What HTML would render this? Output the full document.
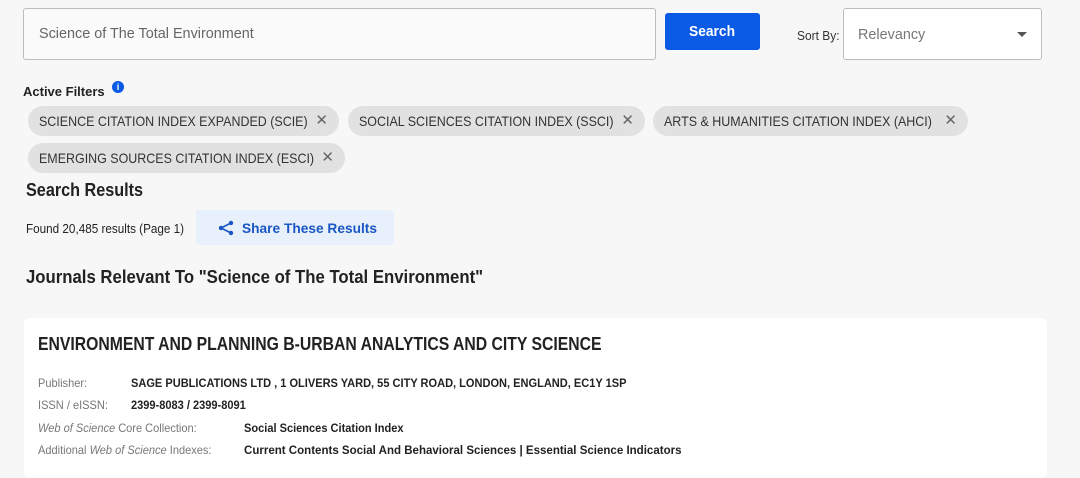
<!DOCTYPE html>
<html><head><meta charset="utf-8"><style>
*{margin:0;padding:0;box-sizing:border-box}
body{width:1080px;height:460px;background:#f7f7f7;font-family:"Liberation Sans",sans-serif;position:relative;overflow:hidden;color:#333}
.a{position:absolute;white-space:nowrap}
.s{display:inline-block;transform-origin:0 50%;transform:scaleX(.92);white-space:nowrap}
.chip{position:absolute;height:30px;border-radius:15px;background:#e1e1e1;font-size:14px;line-height:30px;padding-left:11px;color:#333;white-space:nowrap}
.chip .x{position:absolute;right:11px;top:0;color:#666;font-size:15px}
.chip .s{transform:scaleX(.89)}
.lab{font-size:12px;color:#777}
.val{font-size:12px;font-weight:bold;color:#222}
</style></head><body>
<div class="a" style="left:23px;top:8px;width:633px;height:52px;border:1px solid #bdbdbd;border-radius:3px;background:#fafafa"></div>
<div class="a" style="left:39px;top:25px;font-size:15px;color:#666"><span class="s" style="transform:scaleX(.96)">Science of The Total Environment</span></div>
<div class="a" style="left:665px;top:13px;width:95px;height:37px;background:#0a5ae6;border-radius:3px;color:#fff;font-weight:bold;font-size:15px;line-height:38px;text-align:center"><span class="s" style="transform-origin:50% 50%">Search</span></div>
<div class="a" style="left:797px;top:28px;font-size:13px;color:#333"><span class="s">Sort By:</span></div>
<div class="a" style="left:843px;top:8px;width:199px;height:52px;border:1px solid #bdbdbd;border-radius:3px;background:#fff"></div>
<div class="a" style="left:858px;top:26px;font-size:15px;color:#777"><span class="s" style="transform:scaleX(.96)">Relevancy</span></div>
<div class="a" style="left:1017px;top:32px;width:0;height:0;border-left:5px solid transparent;border-right:5px solid transparent;border-top:5px solid #555"></div>
<div class="a" style="left:23px;top:84px;font-size:13px;font-weight:bold;color:#222"><span class="s" style="transform:scaleX(1)">Active Filters</span></div>
<div class="a" style="left:112px;top:81px;width:12px;height:12px;border-radius:6px;background:#0a5ae6;color:#fff;font-size:9px;font-weight:bold;line-height:12px;text-align:center">i</div>
<div class="chip" style="left:28px;top:106px;width:311px"><span class="s">SCIENCE CITATION INDEX EXPANDED (SCIE)</span><span class="x">✕</span></div>
<div class="chip" style="left:348px;top:106px;width:297px"><span class="s">SOCIAL SCIENCES CITATION INDEX (SSCI)</span><span class="x">✕</span></div>
<div class="chip" style="left:653px;top:106px;width:315px"><span class="s">ARTS &amp; HUMANITIES CITATION INDEX (AHCI)</span><span class="x">✕</span></div>
<div class="chip" style="left:28px;top:143px;width:317px"><span class="s">EMERGING SOURCES CITATION INDEX (ESCI)</span><span class="x">✕</span></div>
<div class="a" style="left:26px;top:180px;font-size:18px;font-weight:bold;color:#222"><span class="s" style="transform:scaleX(.9)">Search Results</span></div>
<div class="a" style="left:26px;top:221px;font-size:13px;color:#222"><span class="s" style="transform:scaleX(.9)">Found 20,485 results (Page 1)</span></div>
<div class="a" style="left:196px;top:210px;width:198px;height:35px;background:#e8f0fb;border-radius:3px"></div>
<svg class="a" style="left:218px;top:220px" width="16" height="16" viewBox="0 0 16 16"><circle cx="13" cy="3" r="2.2" fill="#1a56c4"/><circle cx="3" cy="8" r="2.2" fill="#1a56c4"/><circle cx="13" cy="13" r="2.2" fill="#1a56c4"/><path d="M13 3L3 8L13 13" stroke="#1a56c4" stroke-width="1.6" fill="none"/></svg>
<div class="a" style="left:242px;top:220px;font-size:14px;font-weight:bold;color:#1a56c4"><span class="s" style="transform:scaleX(.98)">Share These Results</span></div>
<div class="a" style="left:26px;top:267px;font-size:18px;font-weight:bold;color:#222"><span class="s" style="transform:scaleX(.93)">Journals Relevant To "Science of The Total Environment"</span></div>
<div class="a" style="left:24px;top:318px;width:1023px;height:160px;background:#fff;border-radius:6px"></div>
<div class="a" style="left:38px;top:334px;font-size:18px;font-weight:bold;color:#222"><span class="s" style="transform:scaleX(.875)">ENVIRONMENT AND PLANNING B-URBAN ANALYTICS AND CITY SCIENCE</span></div>
<div class="a lab" style="left:38px;top:376px"><span class="s">Publisher:</span></div>
<div class="a val" style="left:131px;top:376px"><span class="s">SAGE PUBLICATIONS LTD , 1 OLIVERS YARD, 55 CITY ROAD, LONDON, ENGLAND, EC1Y 1SP</span></div>
<div class="a lab" style="left:38px;top:398px"><span class="s">ISSN / eISSN:</span></div>
<div class="a val" style="left:131px;top:398px"><span class="s">2399-8083 / 2399-8091</span></div>
<div class="a lab" style="left:38px;top:421px"><span class="s"><i>Web of Science</i> Core Collection:</span></div>
<div class="a val" style="left:244px;top:421px"><span class="s">Social Sciences Citation Index</span></div>
<div class="a lab" style="left:38px;top:443px"><span class="s">Additional <i>Web of Science</i> Indexes:</span></div>
<div class="a val" style="left:244px;top:443px"><span class="s" style="transform:scaleX(.96)">Current Contents Social And Behavioral Sciences | Essential Science Indicators</span></div>
</body></html>
